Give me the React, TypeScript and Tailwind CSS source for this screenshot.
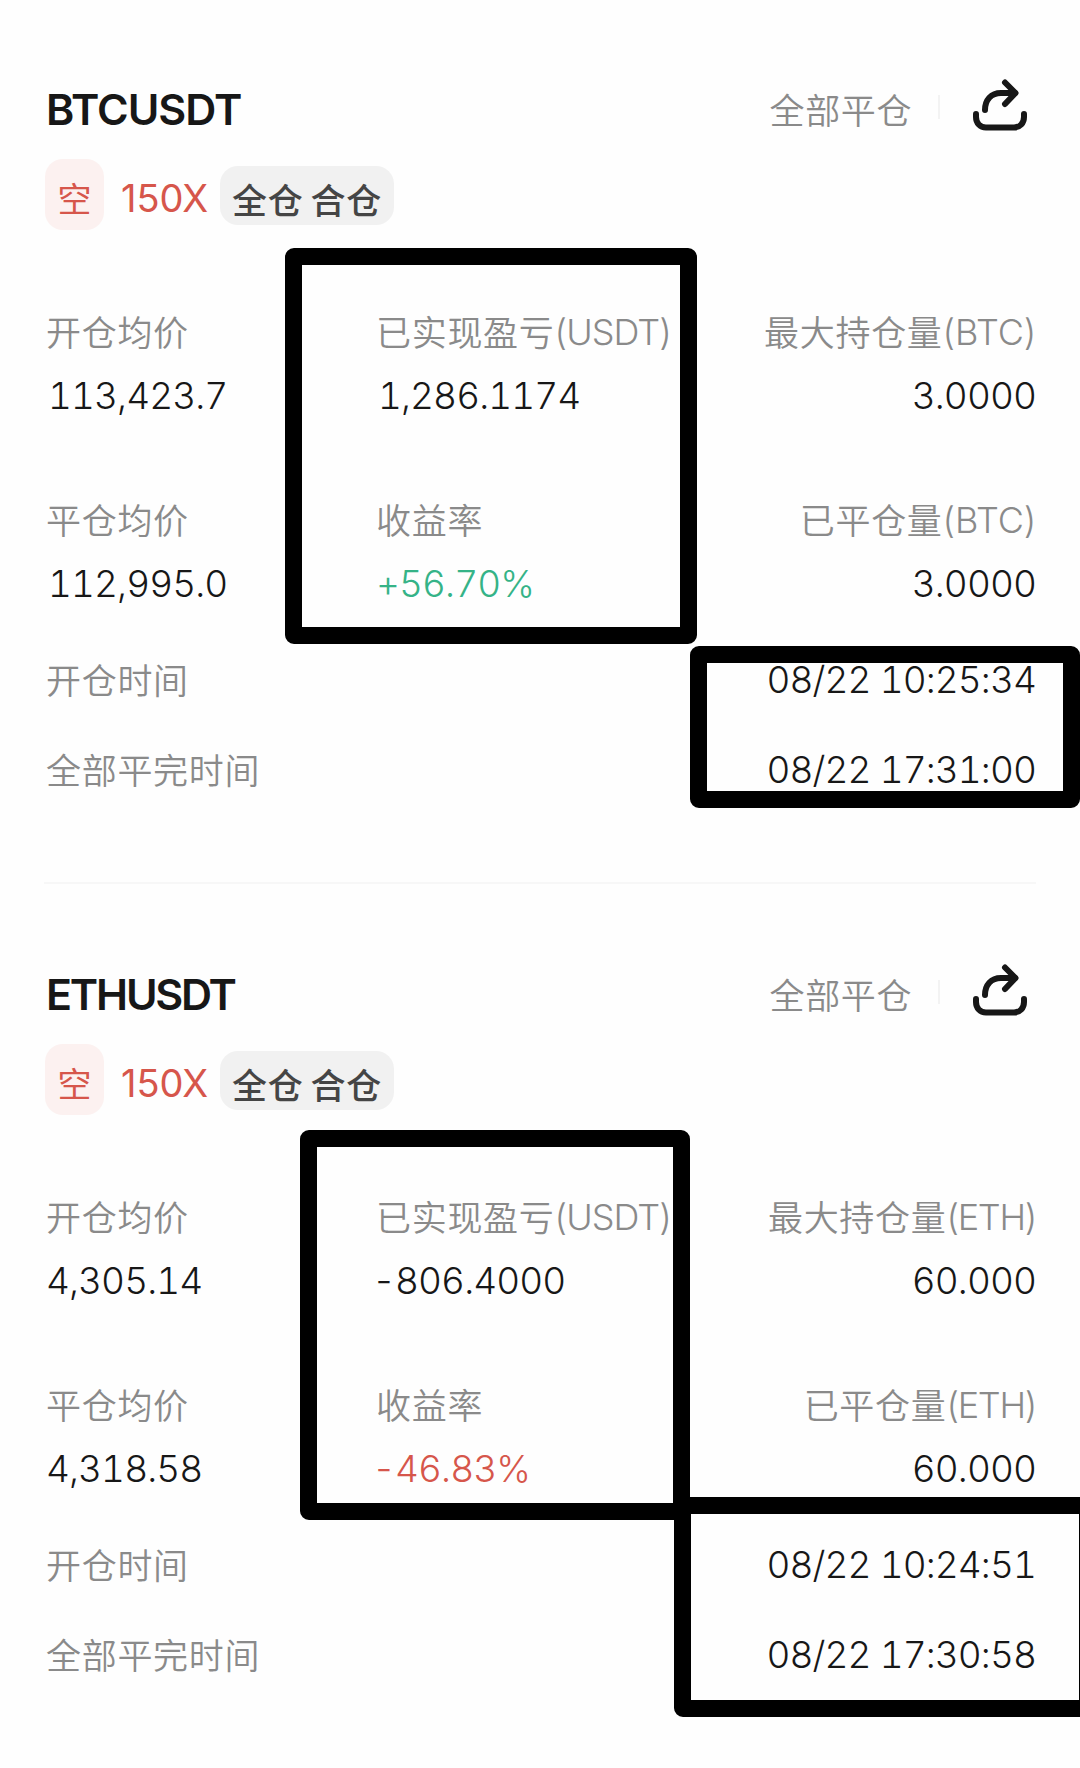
import { clsx } from 'clsx';

interface Position {
  symbol: string;
  symbolTracking: string;
  coin: string;
  coinTracking: string;
  openPrice: string;
  closePrice: string;
  pnl: string;
  roi: string;
  maxSize: string;
  closedSize: string;
  openedAt: string;
  closedAt: string;
}

const POSITIONS: Position[] = [
  {
    symbol: 'BTCUSDT',
    symbolTracking: 'tracking-[-1px]',
    coin: 'BTC',
    coinTracking: 'tracking-[-0.2px]',
    openPrice: '113,423.7',
    closePrice: '112,995.0',
    pnl: '1,286.1174',
    roi: '+56.70%',
    maxSize: '3.0000',
    closedSize: '3.0000',
    openedAt: '08/22 10:25:34',
    closedAt: '08/22 17:31:00',
  },
  {
    symbol: 'ETHUSDT',
    symbolTracking: 'tracking-[-2.2px]',
    coin: 'ETH',
    coinTracking: 'tracking-[-1.3px]',
    openPrice: '4,305.14',
    closePrice: '4,318.58',
    pnl: '-806.4000',
    roi: '-46.83%',
    maxSize: '60.000',
    closedSize: '60.000',
    openedAt: '08/22 10:24:51',
    closedAt: '08/22 17:30:58',
  },
];

// Marker frames drawn over the list
const MARKS = [
  'left-[285px] top-[248px] w-[412px] h-[396px]',
  'left-[690px] top-[646px] w-[390px] h-[162px]',
  'left-[300px] top-[1130px] w-[390px] h-[390px]',
  'left-[674px] top-[1497px] w-[422px] h-[220px]',
];

function ShareIcon() {
  return (
    <svg
      width="54"
      height="52"
      viewBox="0 0 54 52"
      fill="none"
      stroke="#171717"
      strokeWidth="6"
      strokeLinecap="round"
      strokeLinejoin="round"
    >
      <path d="M3 35v3c0 6 4 10.500 10 10.500h28c6 0 10-4.500 10-10.500v-3" />
      <path d="M12 31C12 21 18 14 28 14H42" />
      <path d="M32 3.500 42.500 14 32 25" />
    </svg>
  );
}

function Label({ text, unit, unitTracking }: { text: string; unit?: string; unitTracking?: string }) {
  return (
    <div className="h-12 leading-[50px] text-[35px] tracking-[0.7px] text-[#8a8a8a] font-[350] whitespace-nowrap">
      {text}
      {unit && (
        <span className={clsx('text-[36px] leading-none align-[1px] font-light', unitTracking ?? 'tracking-[-0.9px]')}>
          ({unit})
        </span>
      )}
    </div>
  );
}

function Value({ children, className }: { children: string; className?: string }) {
  return (
    <div
      className={clsx(
        'h-12 text-[37px] font-light tabular-nums tracking-[-0.9px] whitespace-nowrap',
        // optical alignment of the first glyph
        children.startsWith('1') && 'indent-[2px]',
        children.startsWith('-') && '-indent-[4px]',
        className,
      )}
    >
      {children}
    </div>
  );
}

interface FieldProps {
  text: string;
  unit?: string;
  unitTracking?: string;
  value: string;
  className?: string;
}

function Field({ text, unit, unitTracking, value, className }: FieldProps) {
  return (
    <div className="flex flex-col gap-[15px]">
      <Label text={text} unit={unit} unitTracking={unitTracking} />
      <Value className={clsx('leading-[49px]', className ?? 'text-[#171717]')}>{value}</Value>
    </div>
  );
}

function PositionCard({ position: p }: { position: Position }) {
  return (
    <section className="h-[885px] pt-[72px]">
      <div className="flex items-center justify-between h-[73px] pr-[9px]">
        <h2 className={clsx('text-[43px] leading-[74px] font-semibold text-[#171717]', p.symbolTracking)}>{p.symbol}</h2>
        <div className="flex items-center">
          <span className="pt-1.5 text-[35px] tracking-[0.6px] font-[350] text-[#8a8a8a]">全部平仓</span>
          <span className="ml-[26px] mr-[33px] -mt-1 h-6 w-0.5 bg-[#f3f3f3]" />
          <div className="-mt-2">
            <ShareIcon />
          </div>
        </div>
      </div>

      <div className="flex items-center mt-3.5 h-[71px]">
        <span className="flex items-center justify-center w-[59px] h-[71px] pt-2.5 -ml-px rounded-[18px] bg-[#fcf1f0] text-[34px] text-[#d6564b]">空</span>
        <span className="ml-[17px] w-[99px] pt-2 text-[38px] text-[#d6564b]">150X</span>
        <span className="flex items-center justify-center w-[174px] h-[59px] mt-0.5 pt-3 rounded-[18px] bg-[#f1f1f1] text-[35px] tracking-[0.7px] [word-spacing:-3px] font-medium text-[#454545] whitespace-nowrap">
          全仓 合仓
        </span>
      </div>

      <div className="grid grid-cols-[330px_1fr_auto] gap-y-[77px] mt-[78px]">
        <Field text="开仓均价" value={p.openPrice} />
        <Field text="已实现盈亏" unit="USDT" value={p.pnl} />
        <div className="flex justify-end text-right">
          <Field text="最大持仓量" unit={p.coin} unitTracking={p.coinTracking} value={p.maxSize} />
        </div>
        <Field text="平仓均价" value={p.closePrice} />
        <Field
          text="收益率"
          value={p.roi}
          className={p.roi.startsWith('-') ? 'text-[#d6564b]' : 'text-[#35b387]'}
        />
        <div className="flex justify-end text-right">
          <Field text="已平仓量" unit={p.coin} unitTracking={p.coinTracking} value={p.closedSize} />
        </div>
      </div>

      <div className="flex flex-col gap-[42px] mt-[49px]">
        <div className="flex justify-between">
          <Label text="开仓时间" />
          <Value className="leading-[47px] text-[#171717]">{p.openedAt}</Value>
        </div>
        <div className="flex justify-between">
          <Label text="全部平完时间" />
          <Value className="leading-[47px] text-[#171717]">{p.closedAt}</Value>
        </div>
      </div>
    </section>
  );
}

export default function App() {
  return (
    <main className="relative w-[1080px] h-[1768px] overflow-hidden bg-[#fefefe] pl-[46px] pr-[44px] font-['Inter','Noto_Sans_CJK_SC',sans-serif]">
      <PositionCard position={POSITIONS[0]} />
      <div className="-mt-[3px] -ml-0.5 mb-px h-0.5 bg-[#f7f7f7]" />
      <PositionCard position={POSITIONS[1]} />
      {MARKS.map((mark) => (
        <div key={mark} className={clsx('absolute border-[17px] border-black rounded-[9px]', mark)} />
      ))}
    </main>
  );
}
